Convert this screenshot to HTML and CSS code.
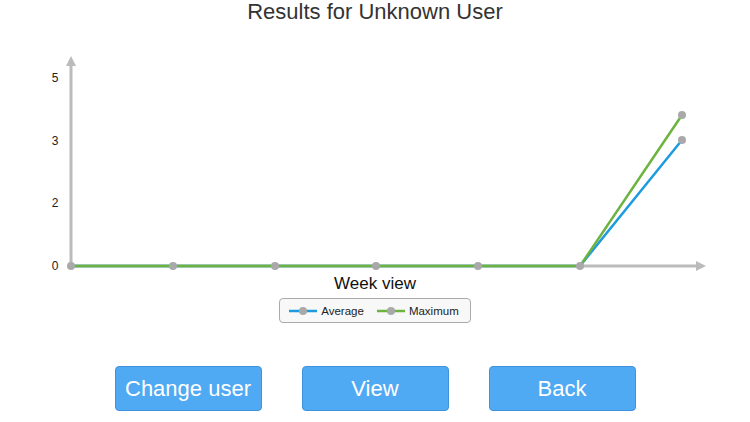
FILE: index.html
```html
<!DOCTYPE html>
<html lang="en">
<head>
  <meta charset="UTF-8">
  <meta name="viewport" content="width=device-width, initial-scale=1.0">
  <title>Results</title>
  <link rel="stylesheet" href="styles.css">
</head>
<body>
  <h1 class="title">Results for Unknown User</h1>

  <svg class="chart" viewBox="0 24 750 252" width="750" height="252">
    <!-- axes -->
    <line class="axis" x1="71" y1="266" x2="71" y2="64"/>
    <polygon class="arrow" points="66,66 71,56 76,66"/>
    <line class="axis" x1="71" y1="266" x2="698" y2="266"/>
    <polygon class="arrow" points="696,261 706,266 696,271"/>

    <text class="tick" x="55" y="82">5</text>
    <text class="tick" x="55" y="145">3</text>
    <text class="tick" x="55" y="207">2</text>
    <text class="tick" x="55" y="270">0</text>

    <!-- series -->
    <polyline class="series avg" points="71,266 173,266 275,266 376,266 478,266 580,266 682,140"/>
    <polyline class="series max" points="71,266 173,266 275,266 376,266 478,266 580,266 682,115"/>

    <g class="dots">
      <circle cx="71" cy="266" r="4"/>
      <circle cx="173" cy="266" r="4"/>
      <circle cx="275" cy="266" r="4"/>
      <circle cx="376" cy="266" r="4"/>
      <circle cx="478" cy="266" r="4"/>
      <circle cx="580" cy="266" r="4"/>
      <circle cx="682" cy="140" r="4"/>
      <circle cx="682" cy="115" r="4"/>
    </g>
  </svg>

  <div class="caption">Week view</div>

  <div class="legend">
    <div class="legend-item">
      <svg class="sample" width="28" height="10" viewBox="0 0 28 10">
        <line class="series avg" x1="0" y1="5" x2="28" y2="5"/>
        <circle class="dot" cx="14" cy="5" r="4"/>
      </svg>
      <span>Average</span>
    </div>
    <div class="legend-item">
      <svg class="sample" width="28" height="10" viewBox="0 0 28 10">
        <line class="series max" x1="0" y1="5" x2="28" y2="5"/>
        <circle class="dot" cx="14" cy="5" r="4"/>
      </svg>
      <span>Maximum</span>
    </div>
  </div>

  <div class="actions">
    <button type="button">Change user</button>
    <button type="button">View</button>
    <button type="button">Back</button>
  </div>
</body>
</html>
```

FILE: styles.css
```css
body {
  margin: 0;
  font-family: "Liberation Sans", Arial, sans-serif;
  color: #222;
  background: #fff;
}
.title {
  margin: 0;
  font-size: 22px;
  font-weight: normal;
  line-height: 24px;
  text-align: center;
  color: #333;
}
.chart {
  display: block;
}
.axis {
  stroke: #bbb;
  stroke-width: 3;
}
.arrow {
  fill: #bbb;
}
.tick {
  font-size: 12px;
  fill: #222;
  text-anchor: middle;
}
.series {
  fill: none;
  stroke-width: 2.5;
  stroke-linejoin: round;
}
.avg {
  stroke: #1d9be0;
}
.max {
  stroke: #6db33f;
}
.dots circle, .dot {
  fill: #a9a9a9;
}
.caption {
  font-size: 17px;
  line-height: 16px;
  text-align: center;
  color: #111;
}
.legend {
  display: flex;
  align-items: center;
  gap: 13px;
  width: fit-content;
  height: 23px;
  margin: 6px auto 0;
  padding: 0 11px 0 9px;
  border: 1px solid #aaa;
  border-radius: 4px;
  background: #f8f8f8;
  font-size: 11.5px;
}
.legend-item {
  display: flex;
  align-items: center;
  gap: 4px;
}
.sample {
  display: block;
}
.actions {
  display: flex;
  justify-content: center;
  gap: 40px;
  margin-top: 43px;
}
button {
  width: 147px;
  height: 45px;
  padding: 0;
  border: 1px solid #3f93dc;
  border-radius: 4px;
  background: #50a9f3;
  color: #fff;
  font-family: "Liberation Sans", Arial, sans-serif;
  font-size: 22px;
  cursor: pointer;
}
button:hover {
  background: #3f97e3;
}
```
